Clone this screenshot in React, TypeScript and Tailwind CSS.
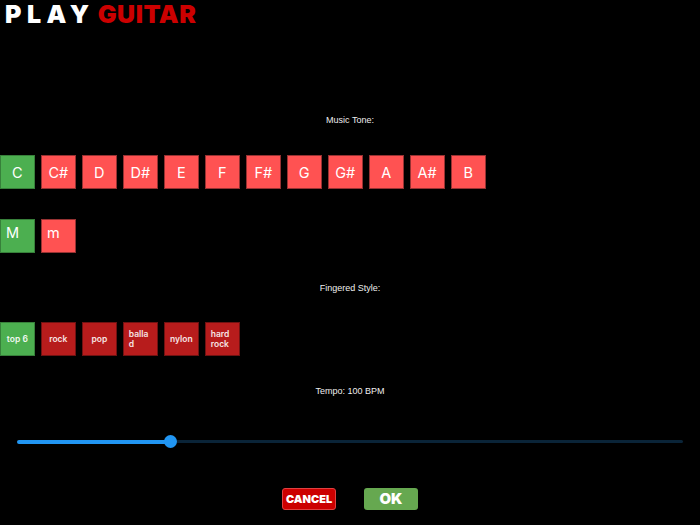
const tones = ["C", "C#", "D", "D#", "E", "F", "F#", "G", "G#", "A", "A#", "B"];
const styles = ["top 6", "rock", "pop", "ballad", "nylon", "hard rock"];

function Tone({ label, active, top }: { label: string; active?: boolean; top?: boolean }) {
  return (
    <div
      className={`w-[34.7px] h-[34px] shrink-0 border flex text-[14.5px] leading-[17px] text-white ${
        active ? "bg-[#4caf50] border-[#37803a]" : "bg-[#ff5252] border-[#963232]"
      } ${top ? "pt-[4px] pl-[5px] justify-start" : "items-center justify-center"}`}
    >
      {label}
    </div>
  );
}

function Style({ label, active }: { label: string; active?: boolean }) {
  return (
    <div
      className={`w-[34.7px] h-[34px] shrink-0 border flex items-center justify-center text-[8.5px] leading-[10px] font-semibold ${
        active ? "bg-[#4caf50] border-[#37803a] text-[#f0f8f0]" : "bg-[#b71c1c] border-[#701212] text-[#f6e4e4]"
      }`}
    >
      <span className={label.length > 5 ? "w-[23px] break-all" : ""}>{label}</span>
    </div>
  );
}

export default function App() {
  return (
    <div className="w-[700px] h-[525px] bg-black text-white overflow-hidden font-['Inter','Liberation_Sans',sans-serif]">
      <div className="h-[30px] pl-[5px] flex items-start text-[25px] leading-[28px] font-black">
        <span className="tracking-[5.5px]">PLAY</span>
        <span className="ml-[3px] tracking-[0.5px] text-[#cc0000]">GUITAR</span>
      </div>
      <div className="mt-[86px] h-[10px] flex items-center justify-center text-[9px] text-[#eeeeee] font-['Liberation_Sans',sans-serif]">Music Tone:</div>
      <div className="mt-[29px] flex gap-[6.3px]">
        {tones.map((t, i) => (
          <Tone key={t} label={t} active={i === 0} />
        ))}
      </div>
      <div className="mt-[30px] flex gap-[6.3px]">
        <Tone label="M" active top />
        <Tone label="m" top />
      </div>
      <div className="mt-[31px] h-[10px] flex items-center justify-center text-[9px] text-[#eeeeee] font-['Liberation_Sans',sans-serif]">Fingered Style:</div>
      <div className="mt-[28px] flex gap-[6.3px]">
        {styles.map((s, i) => (
          <Style key={s} label={s} active={i === 0} />
        ))}
      </div>
      <div className="mt-[31px] h-[10px] flex items-center justify-center text-[9px] text-[#eeeeee] font-['Liberation_Sans',sans-serif]">Tempo: 100 BPM</div>
      <div className="mt-[38px] mx-[17px] h-[13px] flex items-center">
        <div className="w-[153.5px] h-[4px] rounded-l-full bg-[#2196f3]" />
        <div className="w-[13px] h-[13px] -mx-[6.5px] rounded-full bg-[#2196f3] z-10" />
        <div className="flex-1 h-[3px] rounded-r-full bg-[#0a2438]" />
      </div>
      <div className="mt-[40px] flex justify-center gap-[28px]">
        <div className="w-[54px] h-[22px] rounded-[3px] bg-[#cc0000] border border-[#e04040] flex items-center justify-center text-[11px] font-black text-white">
          CANCEL
        </div>
        <div className="w-[54px] h-[22px] rounded-[3px] bg-[#66a850] flex items-center justify-center text-[15px] font-black text-white">
          OK
        </div>
      </div>
    </div>
  );
}
